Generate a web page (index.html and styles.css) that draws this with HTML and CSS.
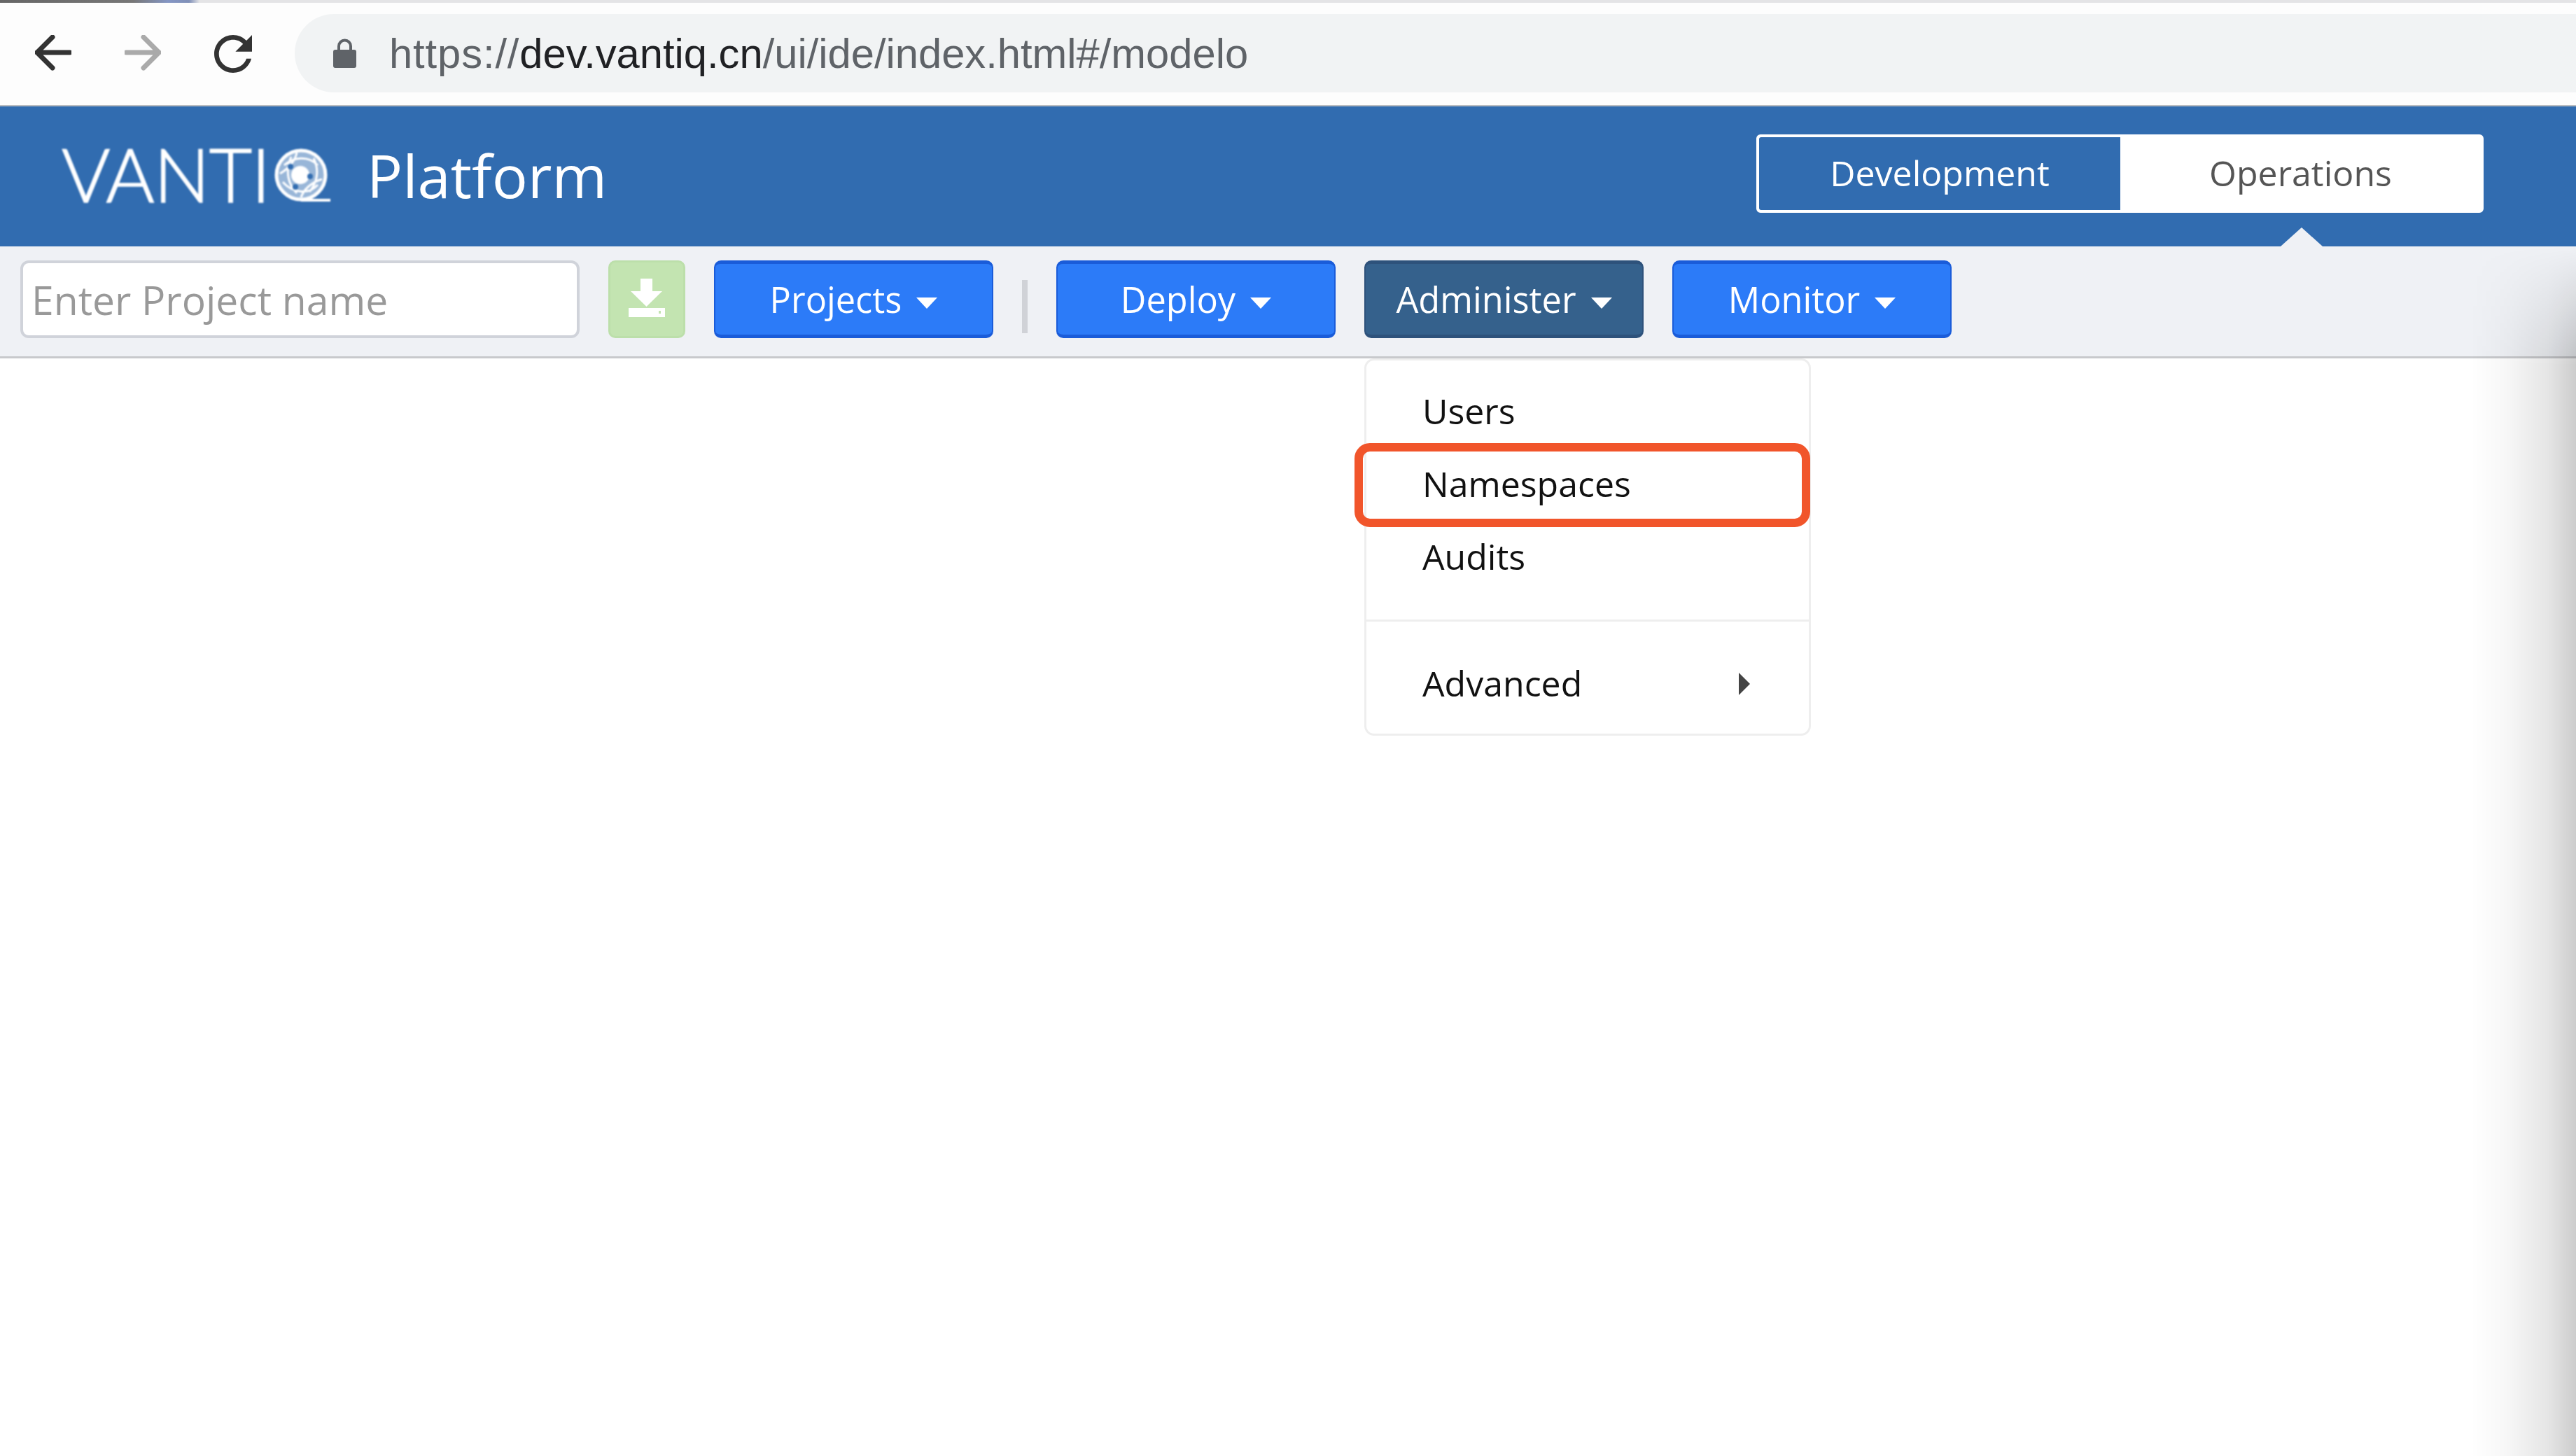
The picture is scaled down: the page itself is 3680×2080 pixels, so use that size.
FILE: index.html
```html
<!DOCTYPE html>
<html lang="en">

<head>
    <meta charset="UTF-8">
    <title>VANTIQ Platform</title>
    <link rel="stylesheet" href="styles.css">
</head>

<body>
    <div class="tab-strip"></div>

    <div class="browser-bar">
        <svg class="nav-icon" viewBox="0 0 52 52">
            <path d="M50 25H3M25 3L3 25l22 22" fill="none" stroke="#333" stroke-width="7" stroke-linecap="round" stroke-linejoin="round"/>
        </svg>
        <svg class="nav-icon nav-forward" viewBox="0 0 52 52">
            <path d="M2 25h47M27 3l22 22-22 22" fill="none" stroke="#aaa" stroke-width="7" stroke-linecap="round" stroke-linejoin="round"/>
        </svg>
        <svg class="nav-icon nav-reload" viewBox="4 4 16 16">
            <path fill="#333" d="M17.65 6.35A7.958 7.958 0 0 0 12 4c-4.42 0-7.99 3.58-7.99 8s3.57 8 7.99 8c3.73 0 6.84-2.55 7.73-6h-2.08A5.99 5.99 0 0 1 12 18c-3.31 0-6-2.69-6-6s2.69-6 6-6c1.66 0 3.14.69 4.22 1.78L13 11h7V4l-2.35 2.35z"/>
        </svg>
        <div class="omnibox">
            <svg class="lock-icon" viewBox="0 0 33 42">
                <path fill="#5f6368" d="M6 16v-5a10.500 10.500 0 0 1 21 0v5h3a3 3 0 0 1 3 3v20a3 3 0 0 1-3 3H3a3 3 0 0 1-3-3V19a3 3 0 0 1 3-3zm4 0h13v-5a6.500 6.500 0 0 0-13 0z"/>
            </svg>
            <span class="url"><span class="url-scheme">https://</span><span class="url-host">dev.vantiq.cn</span>/ui/ide/index.html#/modelo</span>
        </div>
    </div>

    <div class="header">
        <div class="logo">
            <span class="logo-text">VANTI</span>
            <svg class="logo-globe" viewBox="0 0 80 76">
                <circle cx="38" cy="38" r="35" fill="#fff" fill-opacity="0.5" stroke="#fff" stroke-width="5"/>
                <path d="M14 24c14-12 34-14 48 0M12 48c12 14 36 20 50 4M24 12c-8 18-6 38 8 52M56 14c8 16 6 34-6 48M8 36c14-8 22-20 24-30M68 44c-14 4-26 14-30 26" fill="none" stroke="#fff" stroke-width="3"/>
                <circle cx="37" cy="38" r="13" fill="#fff"/>
                <circle cx="23" cy="26" r="4" fill="#316cb0"/>
                <circle cx="51" cy="40" r="4" fill="#316cb0"/>
                <circle cx="30" cy="55" r="4" fill="#316cb0"/>
                <path d="M38 74h42" stroke="#fff" stroke-width="4"/>
            </svg>
        </div>
        <div class="platform-title">Platform</div>
        <div class="mode-toggle">
            <div class="mode-option mode-active">Development</div>
            <div class="mode-option">Operations</div>
        </div>
        <div class="mode-caret"></div>
    </div>

    <div class="toolbar">
        <input class="project-input" type="text" placeholder="Enter Project name">
        <button class="download-button">
            <svg viewBox="0 0 52 55">
                <path fill="#fff" d="M17 0h17v18h14L25.500 40 3 18h14z"/>
                <path fill="#fff" fill-rule="evenodd" d="M0 42h52v13H0zm43 4v4h3v-4z"/>
            </svg>
        </button>
        <button class="menu-button">Projects<span class="caret"></span></button>
        <div class="toolbar-divider"></div>
        <button class="menu-button">Deploy<span class="caret"></span></button>
        <button class="menu-button menu-button-open">Administer<span class="caret"></span></button>
        <button class="menu-button">Monitor<span class="caret"></span></button>
    </div>

    <div class="content">
        <div class="dropdown">
            <div class="dropdown-item">Users</div>
            <div class="dropdown-item dropdown-item-marked">Namespaces</div>
            <div class="dropdown-item">Audits</div>
            <div class="dropdown-divider"></div>
            <div class="dropdown-item">Advanced<span class="submenu-arrow"></span></div>
        </div>
    </div>

    <div class="edge-shadow"></div>
</body>

</html>
```

FILE: styles.css
```css
html,
body {
    margin: 0;
    height: 2080px;
    overflow: hidden;
}

body {
    position: relative;
    font-family: "Open Sans", "Noto Sans", sans-serif;
    background-color: #fff;
}

.tab-strip {
    height: 4px;
    background: linear-gradient(to right, #666 0, #777 190px, #8496c4 240px, #8090b8 270px, #e4e4e6 285px);
}

/* browser address row */
.browser-bar {
    height: 148px;
    box-sizing: border-box;
    padding-top: 16px;
    background-color: #fdfdfd;
    border-bottom: 2px solid #b9bcc0;
    display: flex;
    align-items: flex-start;
}

.nav-icon {
    width: 52px;
    height: 52px;
    margin: 30px 0 0 50px;
    flex: none;
}

.nav-forward {
    margin-left: 76px;
}

.nav-reload {
    width: 54px;
    height: 54px;
    margin-left: 76px;
}

.omnibox {
    flex: 1;
    height: 112px;
    margin-left: 61px;
    padding-left: 55px;
    background-color: #f1f3f4;
    border-radius: 56px 0 0 56px;
    display: flex;
    align-items: center;
}

.lock-icon {
    width: 33px;
    height: 42px;
    flex: none;
}

.url {
    margin-left: 47px;
    font-family: "Liberation Sans", Arial, sans-serif;
    font-size: 59.7px;
    color: #5f6368;
    white-space: nowrap;
}

.url-scheme {
    letter-spacing: 0.9px;
}

.url-host {
    color: #202124;
}

/* blue header */
.header {
    position: relative;
    height: 200px;
    box-sizing: border-box;
    padding: 40px 132px 0 88px;
    background-color: #316cb0;
    display: flex;
    align-items: flex-start;
}

.logo {
    width: 384px;
    height: 112px;
    display: flex;
    align-items: center;
    filter: blur(0.8px);
}

.logo-text {
    font-family: Lato, sans-serif;
    font-weight: 300;
    font-size: 106px;
    line-height: 1;
    color: #fff;
    width: 304px;
    letter-spacing: -1px;
    -webkit-text-stroke: 1.5px #fff;
}

.logo-globe {
    width: 80px;
    height: 76px;
    margin-top: 4px;
}

.platform-title {
    margin-left: 52px;
    font-size: 85px;
    line-height: 112px;
    font-weight: 400;
    color: #fff;
    margin-top: 2px;
}

.mode-toggle {
    margin-left: auto;
    width: 1039px;
    height: 112px;
    box-sizing: border-box;
    background-color: #fff;
    border: 4px solid #fff;
    border-radius: 6px;
    display: flex;
}

.mode-option {
    flex: 1;
    font-size: 50px;
    line-height: 102px;
    text-align: center;
    color: #555;
}

.mode-active {
    flex: none;
    width: 516px;
    color: #fff;
    background-color: #316cb0;
    border-radius: 3px 0 0 3px;
}

.mode-caret {
    position: absolute;
    left: 3258px;
    bottom: 0;
    width: 0;
    height: 0;
    border-left: 30px solid transparent;
    border-right: 30px solid transparent;
    border-bottom: 27px solid #eff1f5;
}

/* toolbar under the header */
.toolbar {
    height: 160px;
    box-sizing: border-box;
    padding: 20px 0 0 29px;
    background-color: #eff1f5;
    border-bottom: 3px solid #c8c9cc;
    display: flex;
    align-items: flex-start;
    gap: 41px;
}

.project-input {
    width: 799px;
    height: 111px;
    box-sizing: border-box;
    padding: 0 12px;
    font-family: "Open Sans", "Noto Sans", sans-serif;
    font-size: 57px;
    background-color: #fff;
    border: 4px solid #d0d3da;
    border-radius: 12px;
    outline: none;
}

.project-input::placeholder {
    color: #999;
    opacity: 1;
}

.download-button {
    width: 110px;
    height: 111px;
    padding: 0;
    background-color: #c3e4b1;
    border: 3px solid #bcdfaa;
    border-radius: 10px;
    display: flex;
    align-items: center;
    justify-content: center;
}

.download-button svg {
    width: 52px;
    height: 55px;
    margin-top: -5px;
}

.menu-button {
    width: 399px;
    height: 111px;
    padding: 0;
    font-family: "Open Sans", "Noto Sans", sans-serif;
    font-size: 50.5px;
    color: #fff;
    background-color: #2c7bf8;
    border: 2px solid #1a5cd9;
    border-top-width: 5px;
    border-bottom-width: 5px;
    border-radius: 10px;
    display: flex;
    align-items: center;
    justify-content: center;
}

.menu-button-open {
    background-color: #35618c;
    border-color: #2e527b;
}

.caret {
    margin: 10px 0 0 21px;
    width: 0;
    height: 0;
    border-left: 15px solid transparent;
    border-right: 15px solid transparent;
    border-top: 16px solid #fff;
}

.toolbar-divider {
    width: 8px;
    height: 76px;
    margin-top: 28px;
    background-color: #d0d2d7;
}

/* admin dropdown */
.content {
    position: relative;
}

.dropdown {
    position: absolute;
    left: 1949px;
    top: 0;
    width: 638px;
    height: 539px;
    box-sizing: border-box;
    padding: 20px 0 0;
    background-color: #fff;
    border: 3px solid #eee;
    border-radius: 14px;
}

.dropdown-item {
    position: relative;
    height: 104px;
    padding-left: 80px;
    font-size: 50px;
    line-height: 104px;
    color: #111;
}

.dropdown-item-marked::after {
    content: "";
    position: absolute;
    left: -17px;
    right: -2px;
    top: -6px;
    bottom: -10px;
    border: 12px solid #f1552b;
    border-radius: 22px;
}

.dropdown-divider {
    height: 3px;
    margin: 38px 0 36px;
    background-color: #eee;
}

.submenu-arrow {
    position: absolute;
    left: 532px;
    top: 37px;
    width: 0;
    height: 0;
    border-top: 16px solid transparent;
    border-bottom: 16px solid transparent;
    border-left: 16px solid #444;
}

/* shadow creeping in from the right edge */
.edge-shadow {
    position: absolute;
    top: 352px;
    right: 0;
    bottom: 0;
    width: 150px;
    background: linear-gradient(to right, rgba(0, 0, 0, 0) 0, rgba(0, 0, 0, 0.03) 50px, rgba(0, 0, 0, 0.1) 110px, rgba(0, 0, 0, 0.2) 150px);
    -webkit-mask-image: linear-gradient(to bottom, rgba(0, 0, 0, 0) 0, #000 170px);
    mask-image: linear-gradient(to bottom, rgba(0, 0, 0, 0) 0, #000 170px);
}
```
